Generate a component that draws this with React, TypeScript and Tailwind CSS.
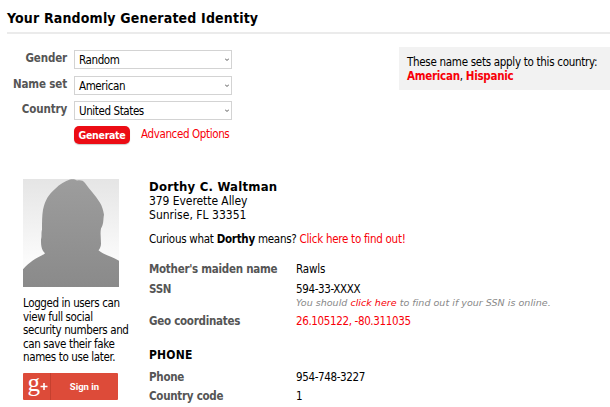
import type { ReactNode } from "react";

const FILTERS = [
  { label: "Gender", value: "Random" },
  { label: "Name set", value: "American" },
  { label: "Country", value: "United States" },
];

function Link({ children, className = "" }: { children: ReactNode; className?: string }) {
  return (
    <a href="#" className={`text-[#f80008] ${className}`}>
      {children}
    </a>
  );
}

function Row({ label, children, className = "" }: { label: ReactNode; children: ReactNode; className?: string }) {
  return (
    <div className={`flex items-start ${className}`}>
      <dt className="w-[147px] shrink-0 font-bold text-[#555]">{label}</dt>
      <dd className="tracking-[-0.36px]">{children}</dd>
    </div>
  );
}

function Avatar() {
  return (
    <svg className="block h-[108px] w-24" viewBox="0 0 96 109" preserveAspectRatio="none">
      <defs>
        <linearGradient id="backdrop" x1="0" y1="0" x2="0" y2="1">
          <stop offset="0" stopColor="#e5e5e5" />
          <stop offset="0.75" stopColor="#fbfbfb" />
        </linearGradient>
        <linearGradient id="person" x1="0" y1="0" x2="0" y2="1">
          <stop offset="0" stopColor="#9d9d9d" />
          <stop offset="1" stopColor="#8a8a8a" />
        </linearGradient>
      </defs>
      <rect width="96" height="109" fill="url(#backdrop)" />
      <path
        d="M0 91C6 84 13 80 21 76L22 75C18 71 18 66 18 61C19 58 18 55 19 51C19 43 19 37 20 31C22 21 26 15 32 10C37 5 42 2 47 .5C50 0 52 .3 54 1.500C57 1 60 1 62 4C67 11 72 16 77 24C79 27 80 31 81 36C80 41 81 45 78 50C77 55 78 60 78 65C78 68 77 70 75.500 72C81 77 89 78 96 82.500V109H0Z"
        fill="url(#person)"
      />
    </svg>
  );
}

export default function App() {
  return (
    <main className="h-[407px] w-[610px] overflow-hidden bg-white font-['DejaVu_Sans_Condensed','DejaVu_Sans',sans-serif] text-[11.500px] leading-[14px] tracking-[-0.27px] whitespace-nowrap text-black">
      <h1 className="ml-[7px] h-[34px] border-b-2 border-[#ebebeb] pt-[9px] text-[14px] leading-[18px] font-bold tracking-[0.17px]">
        Your Randomly Generated Identity
      </h1>

      <section className="flex h-[145px] items-start justify-between pt-[13px]">
        <div className="pt-[3px]">
          {FILTERS.map((f) => (
            <div key={f.label} className="flex h-[25.500px] items-start">
              <label className="w-[67px] pt-px text-right font-bold tracking-[-0.15px] text-[#555]">{f.label}</label>
              <button className="ml-[7px] flex h-[19px] w-[158px] items-center justify-between border border-[#d3d3d3] pr-[2px] pl-1">
                <span className="pt-px tracking-[-0.4px]">{f.value}</span>
                <svg className="h-[3px] w-1" viewBox="0 0 4 3" fill="none" stroke="#555">
                  <path d="M0 .5L2 2.500L4 .5" />
                </svg>
              </button>
            </div>
          ))}
          <div className="ml-[74px] flex items-start">
            <button className="-mt-px h-[18px] w-[56px] rounded-[5px] bg-[#ec0c14] text-[10.500px] leading-[18px] font-bold tracking-[-0.3px] text-white shadow-[0_1px_1px_#ccc]">
              Generate
            </button>
            <Link className="ml-[11px] tracking-[-0.37px]">Advanced Options</Link>
          </div>
        </div>

        <aside className="h-[43px] w-[211px] bg-[#f2f2f2] pt-2 pl-2">
          <p className="tracking-[-0.29px]">These name sets apply to this country:</p>
          <p>
            <Link className="font-bold">American</Link>, <Link className="font-bold">Hispanic</Link>
          </p>
        </aside>
      </section>

      <section className="flex items-start pl-[23px]">
        <div className="w-[126px] shrink-0">
          <Avatar />
          <p className="mt-[10px] leading-[13.500px] tracking-[-0.38px]">
            Logged in users can
            <br />
            view full social
            <br />
            security numbers and
            <br />
            can save their fake
            <br />
            names to use later.
          </p>
          <button className="mt-[8.500px] flex h-[27px] w-[95px] items-center rounded-[1px] bg-[#dd4b39] text-white">
            <span className="flex h-full w-[28px] items-center border-r border-[#c5402f] pl-1">
              {/* g+ mark */}
              <svg className="h-[27px] w-[22px] overflow-visible" viewBox="0 0 22 27" fill="#fff">
                <text x="0.500" y="17.500" className="font-['Liberation_Serif',serif] text-[25px] tracking-normal">
                  g
                </text>
                <path d="M13.500 13.500H20.500M17 10V17" stroke="#fff" strokeWidth="1.600" />
              </svg>
            </span>
            <span className="flex-1 text-center font-['Roboto',sans-serif] text-[9.500px] font-bold tracking-normal">Sign in</span>
          </button>
        </div>

        <div>
          <h2 className="text-[13px] leading-[15px] font-bold tracking-[0.22px]">Dorthy C. Waltman</h2>
          <p className="text-[12px] tracking-[-0.07px]">379 Everette Alley</p>
          <p className="text-[12px] tracking-[0.02px]">Sunrise, FL 33351</p>
          <p className="mt-[10px]">
            Curious what <b>Dorthy</b> means? <Link>Click here to find out!</Link>
          </p>
          <dl className="mt-4">
            <Row label="Mother's maiden name" className="h-5">
              <span className="tracking-[-0.15px]">Rawls</span>
            </Row>
            <Row label="SSN" className="h-8">
              <p>594-33-XXXX</p>
              <p className="font-['DejaVu_Sans',sans-serif] text-[9.500px] tracking-[0.03px] text-[#888] italic">
                You should <Link>click here</Link> to find out if your SSN is online.
              </p>
            </Row>
            <Row label="Geo coordinates">
              <Link>26.105122, -80.311035</Link>
            </Row>
          </dl>
          <h3 className="mt-5 text-[12px] font-bold tracking-[0.2px]">PHONE</h3>
          <dl className="mt-2">
            <Row label="Phone" className="h-[19px]">954-748-3227</Row>
            <Row label="Country code">1</Row>
          </dl>
        </div>
      </section>
    </main>
  );
}
